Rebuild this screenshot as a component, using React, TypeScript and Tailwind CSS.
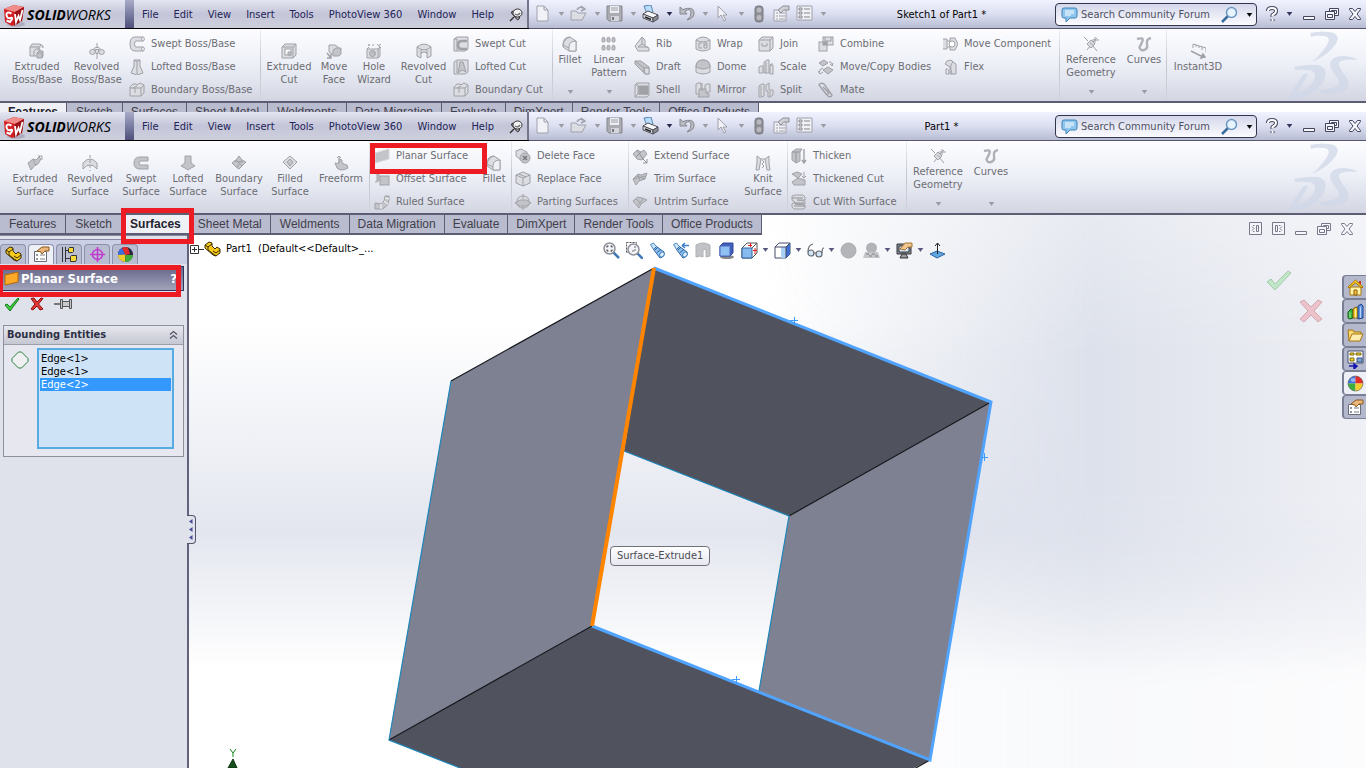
import React from "react";

const G = "#a0a1a6";
const L = "#dcdde2";
const M = "#c3c4c9";

const ribbonIcons: Record<string, React.ReactNode> = {
  extrude: (<><path d="M1 4 3 1h8l3 2v2M1 4h9v9H1zM10 4l2-2" fill={L} /><path d="M5 13V8l2-2h4v3" fill="none" /><path d="M8 10l2-2h4v5l-1 2H8z" fill={M} /><path d="M8 10h5v5" fill="none" /></>),
  revolve: (<><path d="M8 0v5M8 11v5" /><path d="M6 6.500h4l-1 4H7z" fill={L} /><ellipse cx="3.500" cy="9" rx="2.800" ry="2.500" fill={L} /><ellipse cx="12.500" cy="9" rx="2.800" ry="2.500" fill={L} /><path d="M4 6.500Q8 2 12 6.500" fill="none" /></>),
  sweep: (<><path d="M14 1H6Q1 1 1 8t5 7h8v-4H7Q5.500 11 5.500 8T7 5h7z" fill={L} /><ellipse cx="14" cy="3" rx="1.300" ry="2" fill="#fff" /><ellipse cx="14" cy="13" rx="1.300" ry="2" fill="#fff" /></>),
  loft: (<><path d="M5 1h6v6l3 7-6 2-6-2 3-7z" fill={L} /><path d="M5 1q3 3 6 0M8 3v12" fill="none" /></>),
  boundary: (<><path d="M1 5l3-3h3l1 1 3-2 4 2v8l-3 3H1z" fill={L} /><path d="M1 6h11v8M12 6l3-3M4 6l4-2M6 6v5" fill="none" /></>),
  cutBox: (<><path d="M1 4l3-3h11v11l-3 3H1z" fill={L} /><path d="M1 4h11v11M12 4l3-3" fill="none" /><rect x="4" y="6" width="6" height="6" fill="#fafafa" /><path d="M7 9h3v3H7z" fill={M} /></>),
  moveFace: (<><path d="M3 2h6l3 2v7H6L3 9z" fill={L} /><path d="M7 7l3-2h5v6l-2 2H7z" fill={M} /><path d="M1 10l4 5M1 15h4v-4" fill="none" strokeWidth="1.500" /></>),
  hole: (<><path d="M1 6h11v9H1zM1 6l2-2M12 6l2-2v9l-2 2" fill={L} /><circle cx="6.500" cy="10.500" r="3" fill={M} /><circle cx="7.500" cy="10" r="1" fill="#fff" /><path d="M2 2h2M3 1v2M7 1v2M11 1l4 4M12 3l3-2" fill="none" /></>),
  revolvedCut: (<><path d="M1 4q7-6 14 0v9l-4 2v-5q-3-2-6 0v5l-4-2z" fill={L} /><path d="M1 4q4 3 7 3t7-3M5 7v4M11 7v4" fill="none" /></>),
  sweptCut: (<><path d="M1 3l3-2h11v12l-3 2H1z" fill={L} /><path d="M14 5H9Q5 5 5 9t4 4h5" fill="none" strokeWidth="2.500" /><path d="M1 3h3v12" fill="none" /></>),
  loftCut: (<><path d="M1 3l3-2h11v12l-3 2H1z" fill={L} /><path d="M7 3h3l3 10-4-2-4 3z" fill={M} /><path d="M4 2v12" fill="none" /></>),
  fillet: (<><path d="M1 9Q1 1 8 1l6 4v10H7l-6-4z" fill={L} /><path d="M7 15V11Q7 5 14 5v10z" fill="#f0f1f5" /><path d="M1 9l6 3M8 1q-6 2-7 8" fill="none" /></>),
  pattern: (<>{[1, 6, 11].map((x) => [2, 10].map((y) => (<g key={`${x}${y}`}><rect x={x} y={y} width="3" height="4" rx="1" fill={M} /><path d={`M${x} ${y}q1.500-1.500 3 0`} fill="#fff" /></g>)))}</>),
  rib: (<><path d="M1 10l7-9 3 3v6l4 2v3H4z" fill={L} /><path d="M4 11h10M8 1v7l-4 3M8 8l3 2" fill="none" /></>),
  draft: (<><path d="M1 2h6l8 6v7h-4L1 5z" fill={M} /><path d="M1 2l9 7v5M10 9h5" fill="none" /><path d="M10 9h5v6h-4z" fill={L} /></>),
  shell: (<><path d="M1 3l2-2h12v12l-2 2H1z" fill={L} /><path d="M5 4h9v8H5z" fill={G} /><path d="M1 3h3v9L1 15M4 12h9l2 2" fill="none" /></>),
  wrap: (<><path d="M1 4q7-6 14 0v9q-7 4-14 0z" fill={L} /><path d="M1 4q7 4 14 0M7 7H4v5h3M9 7h3v5H9zM9 9h3" fill="none" /></>),
  dome: (<><path d="M1 8Q1 1 8 1t7 7v5q-7 4-14 0z" fill={L} /><path d="M1 8Q1 1 8 1t7 7q-7 4-14 0" fill={M} /></>),
  mirror: (<><path d="M1 2l2-1h3v9l-2 2H1zM10 3l2-1h3v8h-5z" fill={L} /><path d="M4 7h7v4l3 1v3H3l1-2z" fill={M} /><path d="M7 1v8" fill="none" /></>),
  join: (<><path d="M1 4l3-3h11v11l-3 3H1z" fill={L} /><path d="M1 4h11v11M12 4l3-3M4 7v3h5V7" fill="none" /></>),
  scale: (<><path d="M1 8l2-1h2v7H1zM6 3l3-2h2v13H6zM12 6h3v9h-3z" fill={L} /><path d="M8 3v11M12 6l1-1h2" fill={M} /></>),
  split: (<><path d="M1 4l3-2h2v12l-3 1H1zM8 3l3-2v7h4v5l-3 2h-2V9H8z" fill={L} /><path d="M3 4v10M12 9v5" fill="none" /></>),
  combine: (<><rect x="5" y="1" width="10" height="8" fill={L} /><rect x="1" y="6" width="8" height="9" fill={L} /><rect x="5" y="6" width="4" height="3" fill={G} /><path d="M7 1v4h6V1" fill="none" /></>),
  copyBodies: (<><path d="M1 4l5-3 4 3-5 3zM5 11l5-3 5 3-5 4z" fill={M} /><path d="M11 3q4 0 3 4M12 5l2 2 1-3M5 9q-4 1-4 5M0 12l2 3 3-2" fill="none" /></>),
  clip: (<path d="M4 7l6 7q3 2 4-1L6 2Q3 0 1 3l7 9q2 1 3-1L5 5" fill="none" strokeWidth="1.400" />),
  moveComp: (<><path d="M1 3h4v10H1M5 5h3M5 11h3" fill={L} /><path d="M8 2h5l3 6-3 6H8z" fill={L} /><circle cx="10" cy="8" r="3" fill="#fff" /></>),
  flex: (<><path d="M5 2q5-2 6 1l3 2v10H8V8L3 5z" fill={L} /><path d="M4 15V10q3-1 3 5zM11 3q-4 3-1 12" fill="none" /></>),
  refGeom: (<><path d="M1 1l4 4M9 9l5 6M4 14l3-4" fill="none" /><path d="M4 8l4-4 4 4-4 4z" fill={L} /><path d="M7 7l3 2M12 1v6M9 4h7M14 2l-4 4" fill="none" /></>),
  curves: (<path d="M1 3Q8 1 6.500 5T3.500 11Q4 15 8 14t3-6 4-6" fill="none" stroke="#b0b1b6" strokeWidth="2.400" />),
  instant: (<><path d="M3 1l13 4v4M3 1v4M6 2v2M9 3v2M12 4v3" fill="none" /><path d="M1 8l12 6M11 15l4-1-2-3z" fill={G} strokeWidth="1.500" /></>),
  surfExtrude: (<><path d="M1 8l5-4 3 1 3-3 2 2-3 5-3 1-4 5z" fill={M} /><path d="M6 4l3 7M9 5l4-4M11 1h4v4" fill="none" /></>),
  surfRevolve: (<><path d="M1 14V8q7-8 14 0v6q-3-4-7-4t-7 4z" fill={L} /><path d="M8 0v16" strokeDasharray="3 2" /></>),
  surfSweep: (<path d="M15 2H7Q1 2 1 8t6 6h8v-4H8Q6 10 6 8t2-2h7z" fill={M} />),
  surfLoft: (<path d="M5 1h6v7l4 3-4 2-3 2-3-2-4-2 4-3z" fill={M} />),
  surfBoundary: (<><path d="M1 8l4-3 3-4 3 4 4 2-4 4-3 3-3-2z" fill={M} /><path d="M5 5l6 6M11 5l-5 7M3 6l9 1" fill="none" /></>),
  surfFill: (<><path d="M1 7l7-6 7 6-7 7z" fill={L} /><path d="M5 7l3-3 3 3-3 4z" fill={M} /></>),
  freeform: (<><path d="M2 8q2 1 4 0V4l3 1q-1 4 5 5l1 3q-7 4-11 0z" fill={M} /><path d="M6 8V1M4 3l2-2 2 2" fill="none" /></>),
  planar: (<path d="M1 5l14-4v10L1 15z" fill={M} stroke="#d6d7dc" />),
  offset: (<><path d="M1 3l2-1v9H1M5 2v8" fill="none" /><rect x="6" y="5" width="9" height="9" fill={M} /><path d="M4 3v8" /></>),
  ruled: (<><path d="M1 9l6 1q4-2 4-8h4q1 10-7 13H1z" fill={M} /><path d="M7 10v5M10 7l4 3M11 4l4 1" stroke="#fff" /></>),
  delFace: (<><path d="M1 3l5-2 6 3v6L7 13 1 8z" fill={L} /><circle cx="10" cy="10" r="5" fill={M} /><path d="M8 8l4 4M12 8l-4 4" stroke="#77787d" strokeWidth="1.600" /></>),
  replace: (<><path d="M1 4l7-3 7 3v8l-7 3-7-3z" fill={L} /><path d="M1 4l7 3 7-3M8 7v8M4 3l7 3" fill="none" /></>),
  parting: (<><path d="M2 8q0-6 6-6t6 6-6 6-6-6" fill={L} /><path d="M0 9l5-3h7l4 3-5 3H5zM8 0v5M8 12v4" fill={M} /></>),
  extend: (<><path d="M1 6l4-4 4 2 3-2 3 4-5 6-5-1z" fill={M} /><path d="M5 2l6 9M9 4l-5 5M10 10l5 5M11 15h4v-4" fill="none" stroke="#909196" /></>),
  trim: (<><path d="M1 8l5-5 3 1 6-2-2 6-6 2-3 4z" fill={M} /><path d="M6 3l2 7M1 8l13-3M4 5l9 3" fill="none" /></>),
  untrim: (<><path d="M1 7l5-4 4 1 5 2-6 4-2 4z" fill={M} /><path d="M4 5l6 5M12 4L6 11" fill="none" /></>),
  knit: (<><path d="M2 1l4 3-2 11H1l1-7zM14 1l-4 3 2 11h3l-1-7z" fill={L} /><path d="M6 4h4M7 5l2 2-2 2 2 2-2 2" fill="none" /></>),
  thicken: (<><path d="M1 4l4-3h6l-2 3v9l-4 2-4-3z" fill={M} /><path d="M1 4h8M5 4v11M13 1v13M11 12l2 3 2-3" fill="none" strokeWidth="1.400" /></>),
  thickCut: (<><path d="M1 3l5-2 5 2-4 4zM1 11l6-4 7 2v5H3z" fill={M} /><path d="M13 1v6M11 5l2 2 2-2" fill="none" /></>),
  cutWith: (<><path d="M1 2l3-1h8l2 2v3H6l8 1v3H4l10 1v3l-2 1H3l-2-2v-3l3-2-3-2z" fill={L} /><path d="M1 4h11M3 9h10M3 12h11" stroke="#8e8f94" /></>),
};

function RIcon({ name }: { name: string }) {
  return (
    <svg width="16" height="16" viewBox="0 0 16 16" className="shrink-0" stroke={G} strokeWidth="1" aria-hidden="true">
      {ribbonIcons[name]}
    </svg>
  );
}

function Arrow({ color = "#9a9ba0" }: { color?: string }) {
  return (
    <svg width="7" height="4" viewBox="0 0 7 4" className="shrink-0" aria-hidden="true">
      <path d="M1 0h5L3.500 3.500z" fill={color} stroke={color} strokeWidth="0.500" />
    </svg>
  );
}

function Big({ w, icon, lines, drop }: { w: string; icon: string; lines: string[]; drop?: boolean }) {
  return (
    <button className={`${w} flex shrink-0 flex-col items-center whitespace-nowrap leading-[13px] ${drop ? "pt-[7px]" : "pt-[14px]"}`}>
      <RIcon name={icon} />
      <span className="mt-px">
        {lines.map((l) => (<span key={l} className="block">{l}</span>))}
      </span>
      {drop && <span className="mt-auto mb-[7px]"><Arrow /></span>}
    </button>
  );
}

function Small({ w, rows }: { w: string; rows: { icon: string; label: string; marked?: boolean }[] }) {
  return (
    <div className={`${w} flex shrink-0 flex-col pt-[3px] pl-[3px]`}>
      {rows.map((r) => (
        <button key={r.label} className="relative flex h-[23px] items-center gap-1.5 whitespace-nowrap text-left">
          <RIcon name={r.icon} />
          {r.label}
          {r.marked && <span className="pointer-events-none absolute -top-[1px] -left-[4px] z-10 h-[31px] w-[117px] border-[5px] border-[#ed1c24]" />}
        </button>
      ))}
    </div>
  );
}

function Sep() {
  return <div className="w-px shrink-0 bg-gradient-to-b from-[#eeeff4] via-[#c3c4cc] to-[#d3d4de]" />;
}

function DSLogo() {
  return (
    <svg width="76" height="72" viewBox="0 0 76 72" className="ml-auto shrink-0" fill="#d0d8e8" opacity="0.75" aria-hidden="true">
      <path d="M20 4Q34 1 44 4Q51 8 45 16Q38 26 22 33Q34 22 38 14Q41 7 32 7Q26 6 21 8z" />
      <path d="M4 38Q22 34 31 37Q39 42 33 53Q25 67 -4 72L10 50L14 45H18L7 65Q20 60 24 51Q28 42 18 41Q12 40 5 41z" />
      <path d="M67 31Q66 28 54 27Q41 27 40 35Q40 41 47 48Q52 55 45 58Q40 60 30 61L31 64Q50 66 57 60Q62 54 54 45Q48 37 49 34Q52 29 67 31z" />
    </svg>
  );
}

function Cube() {
  return (
    <svg width="24" height="25" viewBox="0 0 24 25" className="shrink-0" aria-hidden="true">
      <ellipse cx="14" cy="21" rx="9" ry="3" fill="#9798a8" opacity="0.600" />
      <path d="M2 6l10-4 10 2-2 14-10 5-7-4z" fill="#d22025" />
      <path d="M2 6l10-4 10 2-9 5z" fill="#f08d88" />
      <path d="M13 9l9-5-2 14-8 5z" fill="#9c1116" />
      <path d="M9.500 10.500Q4 8 4.500 12t4 3-.5 4l-3.500-1.500" fill="none" stroke="#fff" strokeWidth="2" />
      <path d="M13 11l1 8 2.500-6 1.500 4 2.500-10" fill="none" stroke="#fff" strokeWidth="1.800" />
    </svg>
  );
}

const tool: Record<string, React.ReactNode> = {
  new: <path d="M3 1h7l4 4v11H3z M10 1v4h4" fill="#f1f2f8" stroke="#9fa0aa" />,
  open: <><path d="M1 6h5l2 2h5l3 0-4 7H1z" fill="#dcdde2" stroke="#9fa0aa" /><path d="M7 5q2-4 6-2M11 1l4 3-4 2" fill="none" stroke="#9fa0aa" strokeWidth="1.500" /></>,
  save: <><path d="M1 1h15v15H3l-2-2z" fill="#aaaab2" stroke="#85868e" /><path d="M4 1h9v7H4z" fill="#ececf1" /><path d="M5 3h7M5 5h7" stroke="#9fa0aa" /><path d="M5 11h8v5H5z" fill="#d4d5db" /><path d="M6 12h2v3H6z" fill="#77787f" /></>,
  print: <><path d="M2 1l7-1 2 7-6 2z" fill="#b9dcf8" stroke="#5689b8" /><path d="M1 9l5-3 10 4-5 3z" fill="#f8f8f8" stroke="#4f5058" /><path d="M1 9l10 4v4L1 13z" fill="#dcdde2" stroke="#4f5058" /><path d="M11 13l5-3v4l-5 3z" fill="#8c8d95" stroke="#4f5058" /><path d="M3 12l6 2.500" stroke="#222" strokeWidth="1.500" /></>,
  undo: <path d="M2 2v7h7L7 6.500q5-4 6 .5t-4 8q8-2 7-8T5 4.500z" fill="#b9bac2" stroke="#85868e" />,
  cursor: <path d="M4 1v12l3-3 3 6 2-1-3-5h4z" fill="#f1f2f8" stroke="#9fa0aa" />,
  traffic: <><rect x="5" y="1" width="8" height="16" rx="3" fill="#8f9097" stroke="#77787f" /><circle cx="9" cy="5" r="2.500" fill="#b9bac0" /><circle cx="9" cy="12.500" r="2.500" fill="#b9bac0" /></>,
  props: <><path d="M1 5h12v11H1z" fill="#f1f2f6" stroke="#9fa0aa" /><path d="M3 8h2M3 11h2M3 14h2M6 8h6M6 11h6M6 14h6" stroke="#9fa0aa" /><path d="M5 5l5-4h6v4h-5l-3 3z" fill="#cfd0d6" stroke="#8f9097" /></>,
  list: <><path d="M1 1h15v14H1z" fill="#f1f2f6" stroke="#9fa0aa" /><path d="M3 3h3v2H3zM3 7h3v2H3zM3 11h3v2H3zM8 4h6M8 8h6M8 12h6" fill="none" stroke="#85868e" /></>,
};

function ToolBtn({ name, drop, dark, label }: { name: string; drop?: boolean; dark?: boolean; label: string }) {
  return (
    <button aria-label={label} className={`flex shrink-0 items-center gap-[6px] ${drop ? "w-9" : "w-[21px]"}`}>
      <svg width="18" height="18" viewBox="0 0 18 18" className="shrink-0" aria-hidden="true">{tool[name]}</svg>
      {drop && <Arrow color={dark ? "#26264e" : "#9a9ba0"} />}
    </button>
  );
}

function WinGlyph({ kind, color }: { kind: "min" | "restore" | "close"; color: string }) {
  return (
    <svg width="16" height="14" viewBox="0 0 16 14" fill="#f6f7fc" stroke={color} aria-hidden="true">
      {kind === "min" && <path d="M2.500 9.500h11v3h-11z" />}
      {kind === "restore" && <><path d="M5.500 1.500h9v7h-9z" /><path d="M7.500 3.500h5v3h-5z" /><path d="M1.500 4.500h9v8h-9z" /><path d="M3.500 7.500h5v3h-5z" /></>}
      {kind === "close" && <path d="M2.500 1.500h3L8 4.500l2.500-3h3v1L10 7l3.500 4.500v1h-3L8 9.500l-2.500 3h-3v-1L6 7 2.500 2.500z" />}
    </svg>
  );
}

const menus = ["File", "Edit", "View", "Insert", "Tools", "PhotoView 360", "Window", "Help"];

function Header({ title }: { title: string }) {
  return (
    <header className="flex h-[29px] shrink-0 border-b border-[#565770] bg-gradient-to-b from-[#f0f2ff] via-[#dcdff0] to-[#b9bdd4]">
      <div className="-mb-px flex shrink-0 border-b border-black bg-gradient-to-b from-[#e4e6f2] via-[#c3c5d8] to-[#cfd0dd]">
        <div className="flex w-[125px] items-center pt-0.5 pl-0.5">
          <Cube />
          <span className="ml-px whitespace-nowrap font-['Open_Sans',sans-serif] text-[14px] italic text-black">
            <b>SOLID</b>WORKS
          </span>
        </div>
        <div className="w-[9px] bg-gradient-to-b from-[#a9abc8] to-[#50517c]" />
        <nav className="flex w-[395px] items-center gap-[15px] border-r-2 border-[#75768c] pt-0.5 pl-2 text-[#232458]">
          {menus.map((m) => (<button key={m} className="whitespace-nowrap">{m}</button>))}
          <svg width="14" height="14" viewBox="0 0 14 14" className="shrink-0" aria-hidden="true">
            <path d="M1 13l4-4" stroke="#333" strokeWidth="1.500" />
            <path d="M2.500 5l6 7q3-1 2-4L5 3q-3 0-2.500 2z" fill="#9b9ca6" stroke="#333" />
            <ellipse cx="8.500" cy="5" rx="4.500" ry="4" fill="#f2f2f5" stroke="#333" />
            <path d="M6 6q3 2 5-1" fill="none" stroke="#777" strokeWidth="1.500" />
          </svg>
        </nav>
      </div>
      <div className="flex shrink-0 items-center pl-[5px]">
        <ToolBtn name="new" drop label="New" />
        <ToolBtn name="open" drop label="Open" />
        <ToolBtn name="save" drop label="Save" />
        <ToolBtn name="print" drop dark label="Print" />
        <ToolBtn name="undo" drop label="Undo" />
        <ToolBtn name="cursor" drop label="Select" />
        <ToolBtn name="traffic" label="Rebuild" />
        <span className="w-0.5" />
        <ToolBtn name="props" label="File properties" />
        <span className="w-0.5" />
        <ToolBtn name="list" drop label="Options" />
      </div>
      <h1 className="flex-1 self-center whitespace-nowrap pt-0.5 pr-1 text-center text-black">{title}</h1>
      <div className="mt-[3px] flex h-[23px] w-[202px] shrink-0 items-center rounded border border-[#33344a] bg-gradient-to-b from-[#d5d8ea] to-[#fbfbff] pl-[5px]">
        <svg width="17" height="16" viewBox="0 0 17 16" className="shrink-0" aria-hidden="true">
          <path d="M3 1h11q2 0 2 2v6q0 2-2 2H9l-4 4v-4H3q-2 0-2-2V3q0-2 2-2z" fill="#8ec6ee" stroke="#3f83b8" />
          <path d="M4 4h9M4 6h9M4 8h6" stroke="#fff" />
        </svg>
        <input aria-label="Search Community Forum" placeholder="Search Community Forum" className="ml-[3px] w-[140px] min-w-0 bg-transparent outline-none placeholder:text-[#4f5063]" />
        <svg width="17" height="17" viewBox="0 0 17 17" className="shrink-0" aria-hidden="true">
          <path d="M1 16l6-6" stroke="#3a6d9e" strokeWidth="2.500" />
          <circle cx="10.500" cy="6.500" r="5" fill="#e8f4fd" stroke="#6a98c0" strokeWidth="1.500" />
        </svg>
        <span className="ml-2"><Arrow color="#000" /></span>
      </div>
      <div className="flex w-[109px] shrink-0 items-center pl-2">
        <button aria-label="Help" className="flex items-center">
          <svg width="14" height="16" viewBox="0 0 14 16" aria-hidden="true">
            <path d="M3 5q0-3 4-3t4 3q0 2-2 3T7.500 10.500M7.500 13v2" fill="none" stroke="#44455c" strokeWidth="4" />
            <path d="M3 5q0-3 4-3t4 3q0 2-2 3T7.500 10.500M7.500 13v2" fill="none" stroke="#fff" strokeWidth="2" />
          </svg>
          <span className="ml-[7px]"><Arrow color="#33345c" /></span>
        </button>
        <div className="ml-2 flex gap-[7px]">
          <button aria-label="Minimize"><WinGlyph kind="min" color="#44455c" /></button>
          <button aria-label="Restore"><WinGlyph kind="restore" color="#44455c" /></button>
          <button aria-label="Close"><WinGlyph kind="close" color="#44455c" /></button>
        </div>
      </div>
    </header>
  );
}

const tabs = ["Features", "Sketch", "Surfaces", "Sheet Metal", "Weldments", "Data Migration", "Evaluate", "DimXpert", "Render Tools", "Office Products"];
const wideTabs = ["Features", "Sketch", "Weldments"];

function Tabs({ active, marked }: { active: string; marked?: boolean }) {
  return (
    <div role="tablist" className="relative flex font-['Liberation_Sans',Arial,sans-serif] text-[12px] leading-[18px] text-[#3f404c]">
      {tabs.map((t) => (
        <button
          key={t}
          role="tab"
          aria-selected={t === active}
          className={`relative h-5 whitespace-nowrap border-r border-b-2 border-[#5d5e72] ${wideTabs.includes(t) && t !== active ? "px-[9px]" : "px-2"} ${t === active ? "bg-[#eff0f5] font-bold text-[#22232e]" : "bg-[#b9bbce]"}`}
        >
          {t}
          {marked && t === active && <span className="pointer-events-none absolute -top-[7px] -left-[1px] z-20 h-9 w-[73px] border-[5px] border-[#ed1c24]" />}
        </button>
      ))}
    </div>
  );
}

function Ribbon({ children }: { children: React.ReactNode }) {
  return (
    <div className="flex h-[74px] shrink-0 border-b-2 border-[#5d5e74] bg-gradient-to-b from-[#fdfdff] via-[#edeff7] to-[#d3d5e2] pl-[7px] text-[#6c6d73]">
      {children}
      <DSLogo />
    </div>
  );
}

function Part() {
  return (
    <svg width="17" height="17" viewBox="0 0 17 17" className="shrink-0" stroke="#3a2c00" aria-hidden="true">
      <path d="M1 4l4-3 3 1v3l3 3 2-2 3 2v4l-4 3-3-1-8-7z" fill="#f7c91c" />
      <path d="M1 4l3 2 4-3M4 6v3l8 6M9 10l3 2 4-3" fill="none" />
    </svg>
  );
}

function Ball() {
  return (
    <svg width="17" height="17" viewBox="0 0 17 17" aria-hidden="true">
      <path d="M8.500 8.500V1A7.500 7.500 0 0 0 1 8.500z" fill="#3c6fe0" />
      <path d="M8.500 8.500V1A7.500 7.500 0 0 1 16 8.500z" fill="#e22b2b" />
      <path d="M8.500 8.500H1A7.500 7.500 0 0 0 8.500 16z" fill="#3fae3a" />
      <path d="M8.500 8.500H16A7.500 7.500 0 0 1 8.500 16z" fill="#f3cd2b" />
      <circle cx="8.500" cy="8.500" r="7.500" fill="none" stroke="#555" opacity="0.600" />
      <ellipse cx="6" cy="5" rx="2.500" ry="2" fill="#fff" opacity="0.450" />
    </svg>
  );
}

function DarkBall() {
  return (
    <svg width="17" height="17" viewBox="0 0 17 17" aria-hidden="true">
      <circle cx="8.500" cy="8.500" r="7.500" fill="#2a2440" />
      <path d="M8.500 8.500L5 2A7.500 7.500 0 0 0 1 9z" fill="#3c6fe0" />
      <path d="M8.500 9L5 2q4-2 6 0l2 6z" fill="#e22b2b" />
      <path d="M8.500 8.500L1 9A7.500 7.500 0 0 0 8 16z" fill="#f3cd2b" />
      <path d="M8.500 9H16A7.500 7.500 0 0 1 8 16z" fill="#3fae3a" />
    </svg>
  );
}

function HandSheet() {
  return (
    <svg width="17" height="17" viewBox="0 0 17 17" aria-hidden="true">
      <path d="M1.500 5.500h12v10h-12z" fill="#fff" stroke="#6a6b78" />
      <path d="M3.500 8.500h1v1h-1zM3.500 12.500h1v1h-1zM7 9h5M7 13h5" fill="#7f9fd0" stroke="#7a7b88" />
      <path d="M4 5l5-4h7v4h-4l-3 3-1-2z" fill="#eab67a" stroke="#8a5a20" />
    </svg>
  );
}

const panelTabs = [
  { label: "Feature tree", icon: <Part /> },
  { label: "Property manager", icon: <HandSheet /> },
  { label: "Configurations", icon: (<svg width="17" height="17" viewBox="0 0 17 17" aria-hidden="true"><path d="M1.500 1v15M4.500 1v15M4 4.500h4M4 12.500h5" stroke="#333" fill="none" /><path d="M7.500 2.500l1-1h4v4l-1 1h-4zM9.500 10.500l1-1h5v4l-1 2h-5z" fill="#f7d93c" stroke="#333" /></svg>) },
  { label: "Dimensions", icon: (<svg width="17" height="17" viewBox="0 0 17 17" aria-hidden="true" fill="none" stroke="#c03ccf" strokeWidth="1.600"><circle cx="8.500" cy="8.500" r="5" /><path d="M8.500 1v15M1 8.500h15" /></svg>) },
  { label: "Appearances", icon: <DarkBall /> },
];

function PropertyPanel() {
  return (
    <aside className="relative flex w-[189px] shrink-0 flex-col border-r-2 border-[#62637a] bg-[#dfe1eb]">
      <div className="h-[5px] border-y border-[#8586a0]" />
      <div className="flex gap-0.5 bg-[#ccd0e6] pt-1">
        {panelTabs.map((p, i) => (
          <button key={p.label} aria-label={p.label} className={`flex h-5 w-[26px] items-center justify-center rounded-t border border-b-0 border-[#8d90a8] ${i === 1 ? "bg-[#eef0f8]" : "bg-[#b9bdd2]"}`}>
            {p.icon}
          </button>
        ))}
      </div>
      <div className="relative mt-0.5 mr-[3px] flex h-[25px] items-center border border-[#30315c] bg-gradient-to-b from-[#66678a] to-[#a2a3ba] pl-[3px] text-[13px] font-bold text-white">
        <svg width="15" height="15" viewBox="0 0 15 15" aria-hidden="true"><path d="M1 4l13-3v10L1 14z" fill="#ffa928" stroke="#b36a05" /></svg>
        <h2 className="ml-0.5 flex-1 whitespace-nowrap">Planar Surface</h2>
        <span className="mr-1.5">?</span>
        <span className="pointer-events-none absolute -top-[2px] -left-[3px] z-10 h-8 w-[183px] border-[5px] border-[#ed1c24]" />
      </div>
      <div className="flex h-[34px] items-start gap-[10px] pt-[5px] pl-1">
        <button aria-label="OK">
          <svg width="16" height="17" viewBox="0 0 16 17" aria-hidden="true"><path d="M1 9l2-1 3 3L14 2l1 1-9 12z" fill="#3fd03f" stroke="#0f7a18" /></svg>
        </button>
        <button aria-label="Cancel">
          <svg width="14" height="17" viewBox="0 0 14 17" aria-hidden="true"><path d="M1 2.500l3-.5 3 4 4-4 2 .5L8.500 8l4.500 5-3 1-3-4-4 4-2-1 4-5z" fill="#e33636" stroke="#8e1010" /></svg>
        </button>
        <button aria-label="Keep visible">
          <svg width="19" height="17" viewBox="0 0 19 17" aria-hidden="true"><path d="M0 8h7" stroke="#555" strokeWidth="1.500" /><path d="M6.500 3.500h2v9h-2zM8.500 5.500h7v5h-7zM15.500 3.500h2v9h-2z" fill="#c8c9cc" stroke="#555" /></svg>
        </button>
      </div>
      <section className="mr-[3px] ml-[3px] border border-[#8e909c] bg-[#e6e7ef]">
        <h3 className="flex h-[19px] items-center justify-between border-b border-[#9b9dab] bg-gradient-to-b from-[#e6e7ee] to-[#c5c7d2] px-[3px] font-bold text-[#2d3044]">
          Bounding Entities
          <button aria-label="Collapse">
            <svg width="11" height="10" viewBox="0 0 11 10" className="mr-px" fill="none" stroke="#555666" strokeWidth="1.300" aria-hidden="true"><path d="M2 4.500l3.500-3 3.500 3M2 8.500l3.500-3 3.500 3" /></svg>
          </button>
        </h3>
        <div className="flex items-start gap-[7px] pt-[3px] pr-[9px] pb-[7px] pl-[6px]">
          <svg width="20" height="20" viewBox="0 0 20 20" className="mt-0.5 shrink-0" aria-hidden="true"><path d="M8.500 2h3l6.500 6.500v3L11.500 18h-3L2 11.500v-3z" fill="#eef0f2" stroke="#2f7d3f" /></svg>
          <ul role="listbox" aria-label="Bounding Entities" className="h-[101px] flex-1 border-2 border-[#57abe2] bg-[#cfe3f7] px-px pt-[2px] leading-[13px] text-black">
            <li role="option" aria-selected="false" className="px-px">Edge&lt;1&gt;</li>
            <li role="option" aria-selected="false" className="px-px">Edge&lt;1&gt;</li>
            <li role="option" aria-selected="true" className="bg-[#3399ff] px-px text-white">Edge&lt;2&gt;</li>
          </ul>
        </div>
      </section>
      <button aria-label="Collapse panel" className="absolute top-[280px] -right-[9px] flex h-[29px] w-[9px] flex-col items-center justify-around rounded-r border border-l-0 border-[#55566c] bg-[#dfe1eb] py-0.5">
        {[0, 1, 2].map((i) => (<svg key={i} width="4" height="5" viewBox="0 0 4 5" aria-hidden="true"><path d="M3.500 0v5L0 2.500z" fill="#4b4c98" /></svg>))}
      </button>
    </aside>
  );
}

const magnifier = (<><path d="M10 10l6 6" stroke="#3e78b5" strokeWidth="2.500" /><circle cx="6.500" cy="6.500" r="5.500" fill="#f4f5f8" stroke="#8f919c" strokeWidth="1.500" /></>);
const scope = (<><path d="M1.500 2.500l3-1.500 3 3.500-3 3z" fill="#c9e4fa" stroke="#4a86c0" /><path d="M4.500 7.500l3-3L15 10q1.500 4-4 6z" fill="#8cc0ee" stroke="#2f64a0" /><path d="M6 8l3-3M8 10.500l4-3" stroke="#2f64a0" /><ellipse cx="13" cy="12.500" rx="2" ry="2.600" fill="#e4f3ff" stroke="#4a86c0" transform="rotate(35 13 12.500)" /></>);
const viewTools: { label: string; drop?: boolean; icon: React.ReactNode }[] = [
  { label: "Zoom to fit", icon: <>{magnifier}<path d="M4 5.500V4h1.500M7.500 4H9v1.500M4 7.500V9h1.500M9 7.500V9H7.500" stroke="#333" fill="none" /></> },
  { label: "Zoom to area", icon: <><path d="M.5.5h10v10H.5z" fill="none" stroke="#555" strokeDasharray="2 1" /><g transform="translate(1 1)">{magnifier}</g><path d="M9 4v5M6 9h2" stroke="#666" strokeDasharray="2 1" /></> },
  { label: "Previous view", icon: scope },
  { label: "Next view", icon: <>{scope}<path d="M10 3.500h7M10 3.500l3-2.500M10 3.500l3 2.500" stroke="#3f7fd0" strokeWidth="1.500" fill="none" /></> },
  { label: "Section view", icon: <path d="M1 3q7-4 14 0v11l-4 1V7L8 8v7l-3-1-4 1z" fill="#c2c3c6" stroke="#b0b1b5" /> },
  { label: "View orientation", icon: <><ellipse cx="9" cy="15" rx="7" ry="2" fill="#888" /><path d="M2 4l3-3h10v10l-3 3H2z" fill="#3f5fbc" stroke="#34489c" /><path d="M2 4h10v10H2z" fill="#8fc0f4" stroke="#4a68b8" /></> },
  { label: "View cube", drop: true, icon: <><path d="M1 6l5-5h10v10l-5 5H1z" fill="#fff" stroke="#555" /><path d="M1 6h10v10H1z" fill="#86bbee" stroke="#2f64a0" /><path d="M11 6l5-5" stroke="#555" /><path d="M7 3.500h4M12 8.500h4M9.500 1v4M14 6v6" stroke="#d22" /></> },
  { label: "Display style", drop: true, icon: <><path d="M1 5l4-4h11v11l-4 4H1z" fill="#fff" stroke="#444b66" /><path d="M12 5l4-4v11l-4 4z" fill="#3f6fd0" /><path d="M7 5h5v11H7z" fill="#a9d2f5" /><path d="M1 5h11v11M12 5l4-4" fill="none" stroke="#444b66" /></> },
  { label: "Hide or show items", drop: true, icon: <g fill="#cfe6f8" stroke="#66686f" strokeWidth="1.200"><circle cx="4" cy="11" r="3" /><circle cx="12" cy="12" r="3" /><path d="M1 10q0-7 5-8M7 11h2M15 11q0-5 2-5" fill="none" /></g> },
  { label: "Edit appearance", icon: <circle cx="8.500" cy="8.500" r="7.500" fill="#b4b5b8" stroke="#aaabad" /> },
  { label: "Apply scene", drop: true, icon: <><circle cx="8.500" cy="6" r="5.500" fill="#b2b3b6" /><path d="M2 10h13l2 6H0z" fill="#c6c7ca" /><path d="M3 11h3v2H3zM9 11h3v2H9zM6 13h3v2H6zM12 13h3v2h-3z" fill="#a2a3a6" /></> },
  { label: "View settings", drop: true, icon: <><path d="M1 2h14v10H1z" fill="#8b8d95" stroke="#33343a" /><path d="M3 4h10v6H3z" fill="#d9ecfa" stroke="#33343a" /><path d="M6 12h4l2 4H4z" fill="#999" stroke="#33343a" /><path d="M4 7l5-6h7v4h-4l-3 3z" fill="#f0c792" stroke="#a87430" /></> },
  { label: "Normal to", icon: <><path d="M1 12l7-3 8 3-8 4z" fill="#5ea7e0" stroke="#2f64a0" /><path d="M8.500 12V1M6 4l2.500-3L11 4" fill="none" stroke="#222" /></> },
];

const paneTabs: { label: string; icon: React.ReactNode }[] = [
  { label: "Resources", icon: <svg width="17" height="17" viewBox="0 0 17 17" aria-hidden="true"><path d="M12 2h2v5h-2z" fill="#c33" /><path d="M3 8h11v8H3z" fill="#fff3a8" stroke="#a8760c" /><path d="M1 8l7.500-7L16 8l-1 1-6.500-5L2 9z" fill="#f7c91c" stroke="#a8760c" /><path d="M7 11h3v5H7z" fill="#f2c43c" stroke="#8a5a10" /></svg> },
  { label: "Design library", icon: <svg width="17" height="17" viewBox="0 0 17 17" aria-hidden="true"><path d="M1 9l3-3 2 1v8l-3 1-2-1z" fill="#35b43c" stroke="#14601a" /><path d="M6 6l3-2 2 1v10H6z" fill="#f4c92c" stroke="#7a5a08" /><path d="M11 3l3-2 2 2v12l-5 1z" fill="#5b8fe0" stroke="#20428a" /><path d="M3 9v6M8.500 6v9M13.500 4v11" stroke="#fff" opacity="0.600" /></svg> },
  { label: "File explorer", icon: <svg width="17" height="17" viewBox="0 0 17 17" aria-hidden="true"><path d="M2 14L1 3h5l1 2h7v3" fill="#f7d873" stroke="#a8760c" /><path d="M2 14l3-7h11l-3 7z" fill="#fdeeb0" stroke="#a8760c" /></svg> },
  { label: "View palette", icon: <svg width="17" height="19" viewBox="0 0 17 19" aria-hidden="true"><path d="M1 1h15v12H1z" fill="#fff" stroke="#44506e" /><path d="M3 3h4v2H3zM3 8h4v3H3zM9 3h5v2H9z" fill="#f4d42c" stroke="#7d6b10" /><path d="M10 8h5v4h-5z" fill="#7fa7dc" stroke="#33507e" /><path d="M2 16h7M7 14l3 2-3 3z" fill="#1414b0" stroke="#1414b0" strokeWidth="1.500" /></svg> },
  { label: "Appearances pane", icon: <Ball /> },
  { label: "Custom properties", icon: <HandSheet /> },
];

function Scene() {
  return (
    <svg width="1366" height="553" viewBox="0 215 1366 553" className="pointer-events-none absolute top-0 left-0" aria-hidden="true">
      <path d="M654 268L451 381L389 740L592 626z" fill="#7d8191" />
      <path d="M654 268L991 402L789 516L624 451z" fill="#50525d" />
      <path d="M991 402L789 516L759 691L930 760z" fill="#7d8191" />
      <path d="M592 626L389 740L460 768H914L930 760z" fill="#50525d" />
      <path d="M654 268L451 381M592 626L389 740M991 402L789 516M930 760L914 769" stroke="#16171c" strokeWidth="1.200" />
      <path d="M451 381L389 740L460 768M624 451L789 516L759 691" fill="none" stroke="#1d84b8" strokeWidth="1.200" />
      <path d="M654 268L991 402L930 760L592 626" fill="none" stroke="#50a4ff" strokeWidth="3" />
      <path d="M654 268L592 626" stroke="#ff8500" strokeWidth="4" />
      <path d="M790 320.500h8M794.500 317v8M981 457.500h7M984.500 453v8M732 679.500h8M736.500 676v8" stroke="#3f9cff" />
      <path d="M230 749l3 4 3-4M233 753v4" fill="none" stroke="#158a1c" />
      <path d="M233 759l-5 9h9z" fill="#17501c" stroke="#0b3310" />
      <path d="M1267 282l4-3 4 5 13-13 3 2-16 17z" fill="#c2e6c8" stroke="#a3c9aa" />
      <path d="M1300 302l4-2 7 7 7-7 4 2-8 9 8 8-4 3-7-7-7 7-4-3 8-8z" fill="#ecc3ca" stroke="#d3a8b0" />
    </svg>
  );
}

export default function App() {
  return (
    <div className="flex h-screen flex-col overflow-hidden bg-white font-['DejaVu_Sans_Condensed','DejaVu_Sans',Tahoma,sans-serif] text-[11px] leading-[14px]">
      <section className="h-28 shrink-0 overflow-hidden">
        <Header title="Sketch1 of Part1 *" />
        <Ribbon>
          <Big w="w-[60px]" icon="extrude" lines={["Extruded", "Boss/Base"]} />
          <Big w="w-[59px]" icon="revolve" lines={["Revolved", "Boss/Base"]} />
          <Small w="w-[134px]" rows={[{ icon: "sweep", label: "Swept Boss/Base" }, { icon: "loft", label: "Lofted Boss/Base" }, { icon: "boundary", label: "Boundary Boss/Base" }]} />
          <Sep />
          <Big w="w-14" icon="cutBox" lines={["Extruded", "Cut"]} />
          <Big w="w-[34px]" icon="moveFace" lines={["Move", "Face"]} />
          <Big w="w-[46px]" icon="hole" lines={["Hole", "Wizard"]} />
          <Big w="w-[53px]" icon="revolvedCut" lines={["Revolved", "Cut"]} />
          <Small w="w-[102px]" rows={[{ icon: "sweptCut", label: "Swept Cut" }, { icon: "loftCut", label: "Lofted Cut" }, { icon: "boundary", label: "Boundary Cut" }]} />
          <Sep />
          <Big w="w-[34px]" icon="fillet" lines={["Fillet"]} drop />
          <Big w="w-11" icon="pattern" lines={["Linear", "Pattern"]} drop />
          <Small w="w-[61px]" rows={[{ icon: "rib", label: "Rib" }, { icon: "draft", label: "Draft" }, { icon: "shell", label: "Shell" }]} />
          <Small w="w-[63px]" rows={[{ icon: "wrap", label: "Wrap" }, { icon: "dome", label: "Dome" }, { icon: "mirror", label: "Mirror" }]} />
          <Small w="w-[60px]" rows={[{ icon: "join", label: "Join" }, { icon: "scale", label: "Scale" }, { icon: "split", label: "Split" }]} />
          <Small w="w-[124px]" rows={[{ icon: "combine", label: "Combine" }, { icon: "copyBodies", label: "Move/Copy Bodies" }, { icon: "clip", label: "Mate" }]} />
          <Small w="w-[120px]" rows={[{ icon: "moveComp", label: "Move Component" }, { icon: "flex", label: "Flex" }]} />
          <Sep />
          <Big w="w-[62px]" icon="refGeom" lines={["Reference", "Geometry"]} drop />
          <Big w="w-11" icon="curves" lines={["Curves"]} drop />
          <Sep />
          <Big w="w-[62px]" icon="instant" lines={["Instant3D"]} />
        </Ribbon>
        <Tabs active="Features" />
      </section>

      <section className="flex min-h-0 flex-1 flex-col">
        <Header title="Part1 *" />
        <Ribbon>
          <Big w="w-14" icon="surfExtrude" lines={["Extruded", "Surface"]} />
          <Big w="w-[54px]" icon="surfRevolve" lines={["Revolved", "Surface"]} />
          <Big w="w-12" icon="surfSweep" lines={["Swept", "Surface"]} />
          <Big w="w-[46px]" icon="surfLoft" lines={["Lofted", "Surface"]} />
          <Big w="w-14" icon="surfBoundary" lines={["Boundary", "Surface"]} />
          <Big w="w-[46px]" icon="surfFill" lines={["Filled", "Surface"]} />
          <Big w="w-14" icon="freeform" lines={["Freeform"]} />
          <Sep />
          <span className="w-px shrink-0" />
          <Small w="w-[106px]" rows={[{ icon: "planar", label: "Planar Surface", marked: true }, { icon: "offset", label: "Offset Surface" }, { icon: "ruled", label: "Ruled Surface" }]} />
          <Big w="w-[34px]" icon="fillet" lines={["Fillet"]} />
          <Sep />
          <Small w="w-[116px]" rows={[{ icon: "delFace", label: "Delete Face" }, { icon: "replace", label: "Replace Face" }, { icon: "parting", label: "Parting Surfaces" }]} />
          <Sep />
          <Small w="w-[110px]" rows={[{ icon: "extend", label: "Extend Surface" }, { icon: "trim", label: "Trim Surface" }, { icon: "untrim", label: "Untrim Surface" }]} />
          <Big w="w-12" icon="knit" lines={["Knit", "Surface"]} />
          <Sep />
          <Small w="w-[118px]" rows={[{ icon: "thicken", label: "Thicken" }, { icon: "thickCut", label: "Thickened Cut" }, { icon: "cutWith", label: "Cut With Surface" }]} />
          <Sep />
          <Big w="w-[62px]" icon="refGeom" lines={["Reference", "Geometry"]} drop />
          <Big w="w-11" icon="curves" lines={["Curves"]} drop />
        </Ribbon>

        <main className="relative flex min-h-0 flex-1 flex-col bg-[linear-gradient(to_bottom,white_0%,white_20%,#e3e6ef_57%,white_82%)]">
          <div className="absolute inset-0 bg-[linear-gradient(to_right,transparent_56%,#dde1eb_80%,#eff0f5_100%)] [mask-image:linear-gradient(to_bottom,rgba(0,0,0,0.7)_0%,#000_25%,#000_50%,rgba(0,0,0,0.2)_85%)]" />
          <Scene />
          <Tabs active="Surfaces" marked />
          <div className="relative flex min-h-0 flex-1">
            <PropertyPanel />
            <div className="relative flex min-w-0 flex-1 justify-between">
              <div className="flex h-7 items-center pl-px whitespace-nowrap text-black">
                <svg width="14" height="9" viewBox="0 0 14 9" aria-hidden="true"><path d="M.5.5h8v8h-8zM2 4.500h5M4.500 2v5M9 4.500h5" fill="none" stroke="#333" /></svg>
                <Part />
                <span className="ml-[5px]">Part1&nbsp; (Default&lt;&lt;Default&gt;_...</span>
              </div>
              <div className="absolute top-[5px] left-[414px] flex h-5 items-center">
                {viewTools.map((v) => (
                  <button key={v.label} aria-label={v.label} className={`flex items-center gap-[4px] ${v.drop ? "w-[33px]" : "w-[23px]"}`}>
                    <svg width="17" height="17" viewBox="0 0 17 17" className="shrink-0" aria-hidden="true">{v.icon}</svg>
                    {v.drop && <Arrow color="#55567c" />}
                  </button>
                ))}
              </div>
              <div className="flex flex-col items-end">
                <div className="-mt-[13px] flex h-[14px] items-center gap-[7px] pr-[11px]">
                  {["Dock left", "Dock right"].map((l, i) => (
                    <button key={l} aria-label={l}>
                      <svg width="16" height="14" viewBox="0 0 16 14" fill="#f4f5f9" stroke="#77798a" aria-hidden="true">
                        <path d="M2.500.5h12v12h-12z" />
                        <path d={i ? "M5.500 3.500h2v6h-2zM9 3.500h1.500M9 9.500h1.500M12 4.500l-2 2 2 2" : "M9.500 3.500h2v6h-2zM6 3.500h1.500M6 9.500h1.500M5 4.500l2 2-2 2"} />
                      </svg>
                    </button>
                  ))}
                  <button aria-label="Minimize document"><WinGlyph kind="min" color="#77798a" /></button>
                  <button aria-label="Restore document"><WinGlyph kind="restore" color="#77798a" /></button>
                  <button aria-label="Close document"><WinGlyph kind="close" color="#77798a" /></button>
                </div>
                <div className="mt-[39px] flex flex-col">
                  {paneTabs.map((p, i) => (
                    <button key={p.label} aria-label={p.label} className={`flex h-6 w-6 items-center justify-center rounded-l border-y border-l-2 border-[#7b7f95] ${i === 4 ? "bg-[#eef0f8]" : "bg-[#b4b8cc]"}`}>
                      {p.icon}
                    </button>
                  ))}
                </div>
              </div>
              <div role="tooltip" className="absolute top-[311px] left-[421px] rounded-sm border border-[#6f7078] bg-gradient-to-b from-white to-[#e6e7f0] px-[6px] py-0.5 whitespace-nowrap text-[#4b4c52]">
                Surface-Extrude1
              </div>
            </div>
          </div>
        </main>
      </section>
    </div>
  );
}
